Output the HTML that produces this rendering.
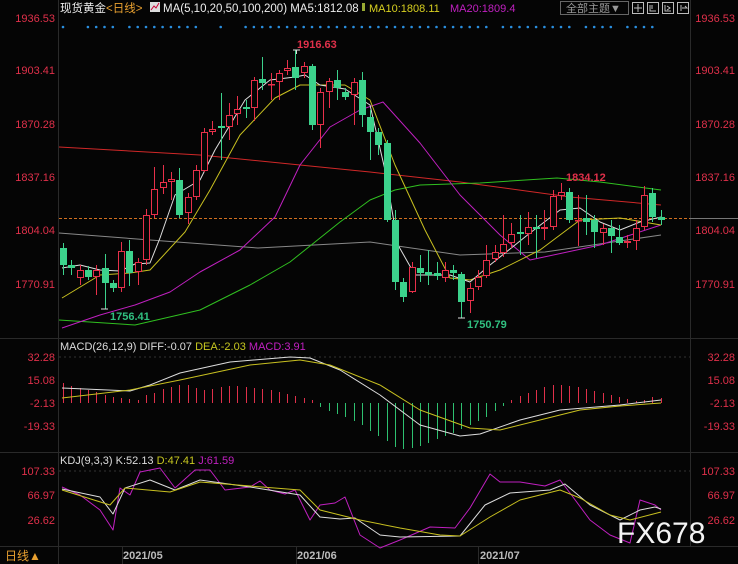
<!DOCTYPE html><html><head><meta charset="utf-8"><style>
body{margin:0;background:#000;width:738px;height:564px;overflow:hidden;font-family:"Liberation Sans","Noto Sans CJK SC",sans-serif}
svg{display:block}
text{font-family:"Liberation Sans","Noto Sans CJK SC",sans-serif}
</style></head><body>
<svg id="s" width="738" height="564" xmlns="http://www.w3.org/2000/svg">
<rect width="738" height="564" fill="#050505"/>
<g stroke="#2a2a2a" stroke-width="1">
<line x1="58.5" y1="0" x2="58.5" y2="564"/><line x1="690.5" y1="0" x2="690.5" y2="546"/>
<line x1="0" y1="338.5" x2="738" y2="338.5"/><line x1="0" y1="452.5" x2="738" y2="452.5"/>
<line x1="0" y1="546.5" x2="738" y2="546.5"/>
<line x1="122.5" y1="546" x2="122.5" y2="564"/><line x1="296.5" y1="546" x2="296.5" y2="564"/><line x1="478.5" y1="546" x2="478.5" y2="564"/>
</g>
<g stroke="#333" stroke-dasharray="2,3"><line x1="59" y1="357" x2="690" y2="357"/><line x1="59" y1="471" x2="690" y2="471"/></g>
<g font-size="11" fill="#e0304a" text-anchor="end">
<text x="55" y="22">1936.53</text><text x="55" y="74">1903.41</text><text x="55" y="128">1870.28</text><text x="55" y="181">1837.16</text><text x="55" y="234">1804.04</text><text x="55" y="288">1770.91</text>
<text x="55" y="361">32.28</text><text x="55" y="384">15.08</text><text x="55" y="407">-2.13</text><text x="55" y="430">-19.33</text>
<text x="55" y="475">107.33</text><text x="55" y="499">66.97</text><text x="55" y="524">26.62</text>
</g>
<g font-size="11" fill="#e0304a" text-anchor="end">
<text x="735" y="22">1936.53</text><text x="735" y="74">1903.41</text><text x="735" y="128">1870.28</text><text x="735" y="181">1837.16</text><text x="735" y="234">1804.04</text><text x="735" y="288">1770.91</text>
<text x="735" y="361">32.28</text><text x="735" y="384">15.08</text><text x="735" y="407">-2.13</text><text x="735" y="430">-19.33</text>
<text x="735" y="475">107.33</text><text x="735" y="499">66.97</text><text x="735" y="524">26.62</text>
</g>
<line x1="59" y1="218.5" x2="690" y2="218.5" stroke="#d07020" stroke-dasharray="3,2"/>
<line x1="690" y1="218.5" x2="738" y2="218.5" stroke="#777"/>
<g id="dots" fill="#2a8fe0"></g>
<g id="ma" fill="none" stroke-width="1"></g>
<g id="candles"></g>
<g id="macd"></g>
<g id="kdj" fill="none" stroke-width="1"></g>
<text x="60" y="12" font-size="11.5" fill="#eee">现货黄金<tspan fill="#e8a030">&lt;日线&gt;</tspan></text>
<rect x="150" y="2" width="10" height="10" fill="#ddd"/><path d="M151 10 L154 6 L156 8 L159 3" stroke="#c03" fill="none"/>
<text x="163" y="12" font-size="11.5" fill="#eee">MA(5,10,20,50,100,200) MA5:1812.08</text>
<rect x="362" y="3" width="3" height="8" fill="#9a3"/>
<text x="369" y="12" font-size="11" fill="#d8d020">MA10:1808.11</text>
<text x="450" y="12" font-size="11" fill="#c020c0">MA20:1809.4</text>
<rect x="560.5" y="1.5" width="68" height="13" fill="none" stroke="#666"/>
<text x="566" y="12" font-size="11" fill="#999">全部主题▼</text>
<g fill="none" stroke="#bbb"><rect x="632.5" y="2.5" width="11" height="11"/><rect x="647.5" y="2.5" width="11" height="11"/><rect x="662.5" y="2.5" width="11" height="11"/><rect x="677.5" y="2.5" width="11" height="11"/>
<path d="M638 4v8M634 8h8M650 5v6h6M652 5v4M665 5v6h6M667 6l3 2-3 2M681 5v6M682 8h5l-2-2"/></g>
<text x="297" y="48" font-size="11" font-weight="bold" fill="#e0304a">1916.63</text>
<path d="M293 50h7M296.5 50v4" stroke="#ddd"/>
<text x="566" y="181" font-size="11" font-weight="bold" fill="#e0304a">1834.12</text>
<text x="110" y="320" font-size="11" font-weight="bold" fill="#30c080">1756.41</text>
<path d="M101 309h7" stroke="#ddd"/>
<text x="467" y="328" font-size="11" font-weight="bold" fill="#30c080">1750.79</text>
<path d="M458 318h7" stroke="#ddd"/>
<text x="60" y="350" font-size="11" fill="#ddd">MACD(26,12,9) DIFF:-0.07 <tspan fill="#c8c820">DEA:-2.03</tspan> <tspan fill="#c020c0">MACD:3.91</tspan></text>
<text x="60" y="464" font-size="11" fill="#ddd">KDJ(9,3,3) K:52.13 <tspan fill="#c8c820">D:47.41</tspan> <tspan fill="#c020c0">J:61.59</tspan></text>
<text x="5" y="560" font-size="12" fill="#e8a030">日线▲</text>
<g font-size="11" font-weight="bold" fill="#bbb"><text x="123" y="559">2021/05</text><text x="297" y="559">2021/06</text><text x="480" y="559">2021/07</text></g>
<text x="617" y="543" font-size="30" fill="#f4f4f4">FX678</text>
</svg>
<script>
var NS="http://www.w3.org/2000/svg";
function el(p,t,a){var e=document.createElementNS(NS,t);for(var k in a)e.setAttribute(k,a[k]);p.appendChild(e);return e;}
function X(i){return 63+i*8.3;}
var C=[[248,265,243,275,'g'],[265,268,260,275,'g'],[270,278,265,285,'r'],[270,277,266,280,'g'],[270,277,265,295,'r'],[268,283,254,309,'g'],[283,288,280,292,'g'],[251,288,242,292,'r'],[251,273,240,286,'g'],[262,272,258,285,'r'],[215,260,209,265,'r'],[189,215,167,218,'r'],[182,188,165,194,'r'],[179,182,172,200,'r'],[180,215,168,218,'g'],[197,213,193,224,'r'],[170,197,165,200,'r'],[132,171,128,172,'r'],[129,132,121,135,'r'],[126,128,93,160,'g'],[115,127,103,140,'r'],[109,114,96,125,'r'],[107,109,100,118,'g'],[80,108,77,121,'r'],[79,83,57,90,'g'],[84,85,73,100,'r'],[73,82,70,100,'r'],[68,71,60,75,'r'],[67,78,50,90,'g'],[66,73,62,78,'r'],[66,125,64,130,'g'],[92,125,88,148,'r'],[81,92,78,108,'r'],[80,88,70,100,'g'],[92,97,88,100,'g'],[82,95,78,125,'r'],[80,115,72,127,'g'],[117,132,110,160,'g'],[132,145,128,155,'g'],[143,220,140,222,'g'],[220,282,210,290,'g'],[282,297,278,302,'g'],[267,292,262,293,'r'],[268,273,255,282,'g'],[272,275,250,285,'g'],[273,276,262,280,'g'],[270,278,262,282,'r'],[270,273,265,280,'g'],[274,302,272,318,'g'],[288,301,283,313,'r'],[277,287,270,290,'r'],[260,276,245,278,'r'],[252,259,245,262,'r'],[244,253,215,257,'r'],[234,243,223,248,'r'],[232,234,215,255,'g'],[227,234,212,245,'r'],[227,229,215,258,'g'],[227,229,210,240,'r'],[196,227,190,230,'r'],[192,196,183,200,'r'],[192,220,188,223,'g'],[220,221,195,246,'r'],[218,222,195,235,'g'],[220,232,215,248,'g'],[228,233,224,245,'r'],[228,236,220,253,'g'],[237,243,225,245,'g'],[241,243,235,248,'r'],[228,241,220,250,'r'],[195,227,186,230,'r'],[193,217,188,222,'g'],[217,220,210,225,'g']];
var cg=document.getElementById('candles');
C.forEach(function(c,i){var x=Math.round(X(i));var col=c[4]=='g'?'#3cd28c':'#e8304a';
el(cg,'line',{x1:x+.5,x2:x+.5,y1:c[2],y2:c[0],stroke:col});el(cg,'line',{x1:x+.5,x2:x+.5,y1:c[1],y2:c[3],stroke:col});
var h=Math.max(1,c[1]-c[0]);
if(c[4]=='g')el(cg,'rect',{x:x-3,y:c[0],width:7,height:h,fill:col});
else el(cg,'rect',{x:x-2.5,y:c[0]+.5,width:6,height:Math.max(0.5,h-1),fill:'#050505',stroke:col});});
var dg=document.getElementById('dots');
[0,3,4,5,6].concat(r(8,16),[19],r(22,51),r(53,61),r(63,66),r(68,71)).forEach(function(i){el(dg,'circle',{cx:X(i),cy:27,r:1.3});});
function r(a,b){var o=[];for(var i=a;i<=b;i++)o.push(i);return o;}
function pl(g,pts,col){el(g,'polyline',{points:pts,stroke:col,fill:'none','stroke-linejoin':'round'});}
var mg=document.getElementById('ma');
pl(mg,"59,233 150,240 258,248 370,242 460,255 545,252 661,235","#888");
pl(mg,"59,147 200,155 300,165 370,172 460,182 570,197 661,205","#d02828");
pl(mg,"59,320 135,325 200,310 250,285 290,262 340,222 370,200 395,190 420,185 480,183 557,178 600,182 661,190","#30c020");
pl(mg,"62,328 100,315 135,305 170,292 200,272 240,250 275,217 300,165 330,127 360,110 383,102 420,143 460,195 500,235 530,260 600,245 661,225","#c020c0");
pl(mg,"62,298 100,275 130,273 150,270 185,232 210,190 240,135 275,98 300,85 345,85 370,100 395,165 425,230 450,278 470,280 500,270 540,250 580,220 620,218 661,225","#c8c020");
pl(mg,"62,268 80,265 100,270 120,271 135,264 150,263 160,238 175,195 200,180 215,150 230,125 245,100 270,80 295,77 305,75 320,85 345,89 370,105 385,170 398,245 415,275 450,275 470,282 490,265 530,233 560,210 580,208 600,222 620,230 640,222 661,217","#ddd");
var ag=document.getElementById('macd');
var H=[20,17,15,13,11,8,6,5,4,3,8,10,14,16,18,18,15,13,14,16,17,17,16,15,14,13,11,9,7,5,3,-4,-8,-11,-14,-18,-22,-28,-33,-38,-44,-46,-45,-43,-40,-36,-33,-30,-26,-22,-18,-14,-8,-3,3,7,10,13,16,18,18,17,16,14,12,10,8,6,4,2,3,6,5];
H.forEach(function(h,i){var x=Math.round(X(i))+.5;el(ag,'line',{x1:x,x2:x,y1:403,y2:403-h,stroke:h>0?'#e0304a':'#2ec070'});});
pl(ag,"62,388 130,391 150,385 180,373 230,362 290,357 310,358 340,370 380,395 420,425 460,436 480,434 520,420 560,410 620,405 661,400","#ddd");
pl(ag,"62,398 130,390 180,380 250,365 300,360 330,365 380,385 420,410 470,428 500,430 540,420 580,410 620,406 661,403","#c8c020");
var kg=document.getElementById('kdj');
pl(kg,"62,487 80,495 100,510 113,530 120,488 130,495 140,472 160,468 175,488 195,470 210,470 225,490 250,487 260,481 270,490 285,494 295,490 310,520 320,505 335,503 345,497 360,535 380,548 400,540 430,527 455,528 470,508 490,474 500,482 520,482 545,486 560,480 570,493 590,520 610,535 630,543 640,500 655,505 661,510","#c020c0");
pl(kg,"62,489 100,497 113,514 125,488 150,480 175,490 200,480 250,487 300,495 320,517 340,519 355,518 380,535 400,537 460,536 485,505 510,493 550,490 565,484 590,505 620,520 640,510 655,507 661,509","#ddd");
pl(kg,"62,490 110,505 125,488 170,492 200,482 300,490 320,510 360,520 400,528 440,535 460,536 490,517 520,500 560,490 580,498 610,515 630,520 661,512","#c8c020");
</script>
</body></html>
